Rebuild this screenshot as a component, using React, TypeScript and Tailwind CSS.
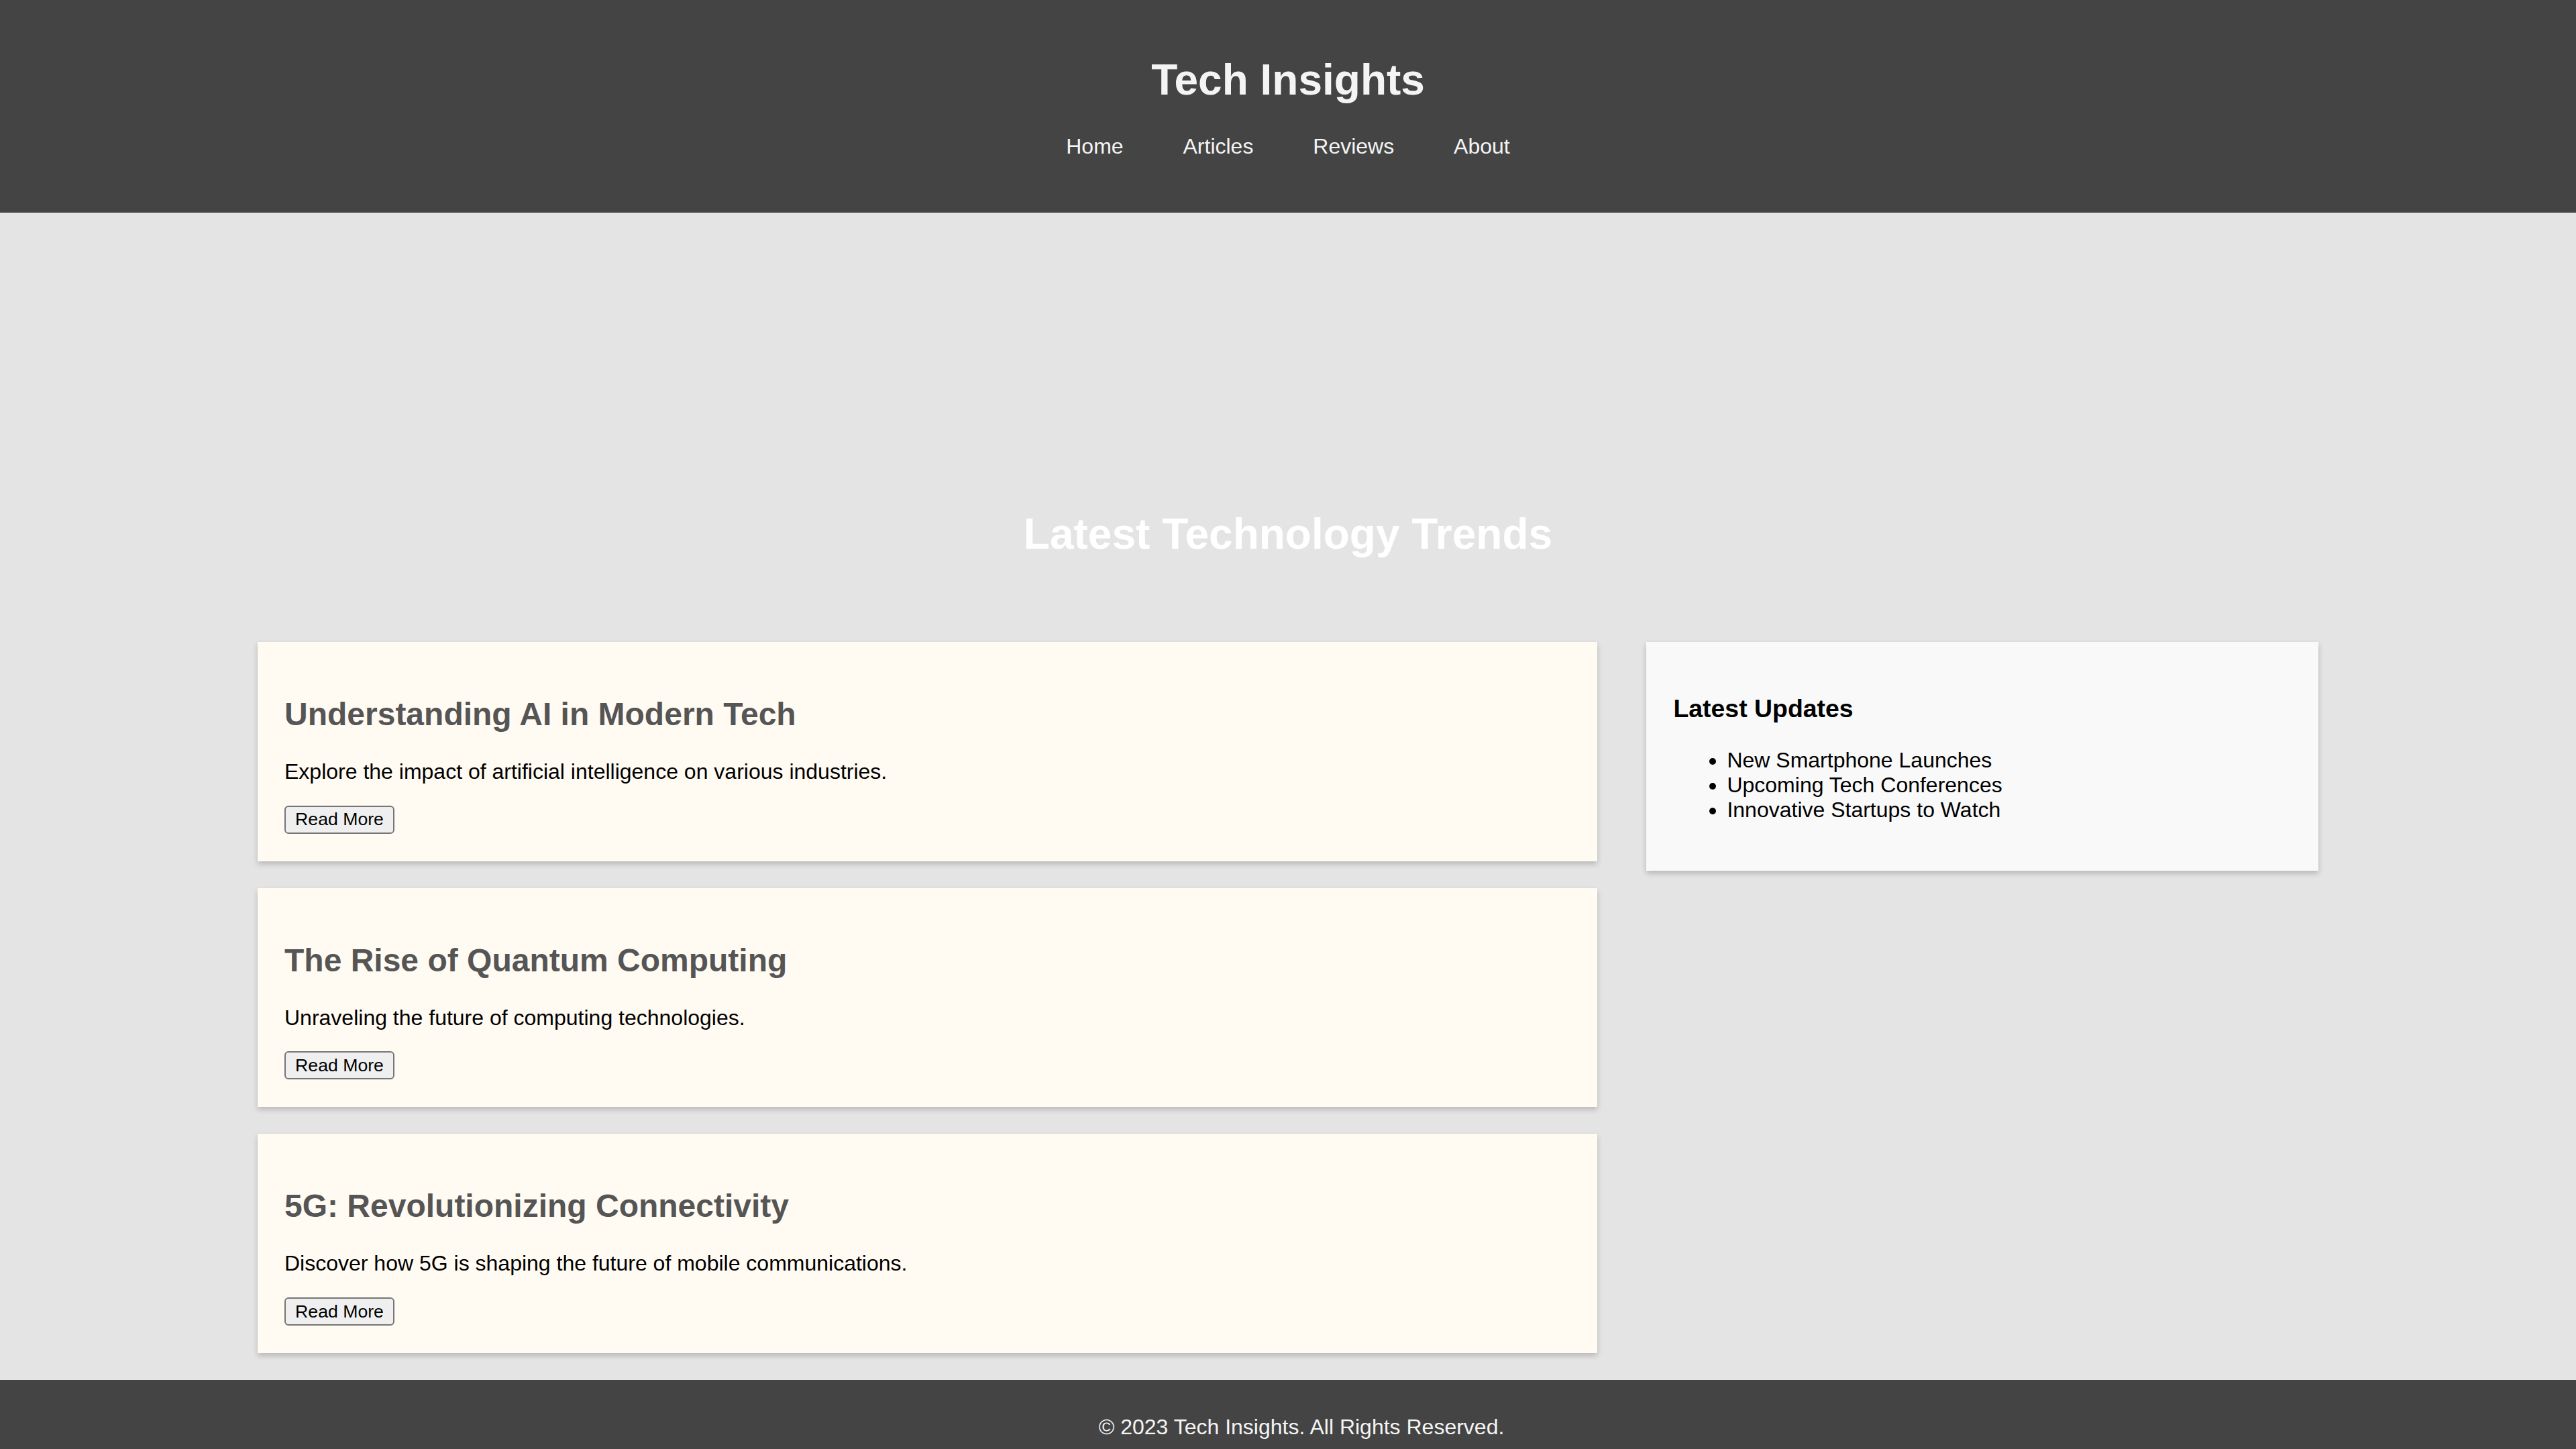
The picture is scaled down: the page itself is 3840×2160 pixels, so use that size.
import React from "react";

const cards = [
  {
    title: "Understanding AI in Modern Tech",
    text: "Explore the impact of artificial intelligence on various industries.",
  },
  {
    title: "The Rise of Quantum Computing",
    text: "Unraveling the future of computing technologies.",
  },
  {
    title: "5G: Revolutionizing Connectivity",
    text: "Discover how 5G is shaping the future of mobile communications.",
  },
];

export default function App() {
  return (
    <div
      className="min-h-screen bg-[#e4e4e4] text-black"
      style={{ fontFamily: '"Liberation Sans", Arial, sans-serif' }}
    >
      <header className="h-[317px] bg-[#444444] pt-[83px] text-center">
        <h1 className="text-[64px] font-bold leading-[73.6px] text-[#f4f4f4]">
          Tech Insights
        </h1>
        <nav className="mt-[43px]">
          <ul className="flex justify-center gap-[88.9px] text-[32px] leading-[36.8px] text-[#f4f4f4]">
            <li>Home</li>
            <li>Articles</li>
            <li>Reviews</li>
            <li>About</li>
          </ul>
        </nav>
      </header>

      <section className="pt-[442.5px] pb-[124px] text-center">
        <h2 className="text-[64px] font-bold leading-[73.6px] text-white">
          Latest Technology Trends
        </h2>
      </section>

      <div className="mx-auto flex w-[3072px] items-start justify-between">
        <main className="w-[1996.8px]">
          {cards.map((c) => (
            <article
              key={c.title}
              className="mb-[40px] h-[326.7px] bg-[#fffaf2] px-[40px] pt-[40px] shadow-[0_4px_8px_rgba(0,0,0,0.2)]"
            >
              <h2 className="mt-[39.84px] mb-[39.84px] text-[48px] font-bold leading-[55.2px] text-[#555555]">
                {c.title}
              </h2>
              <p className="mb-[32px] text-[32px] leading-[36.8px]">{c.text}</p>
              <div className="h-[43px]">
                <button className="flex h-[42px] w-[164px] items-center justify-center rounded-[6px] border-2 border-[#767676] bg-[#efefef] text-[26.67px] leading-none text-black">
                  Read More
                </button>
              </div>
            </article>
          ))}
        </main>

        <aside className="h-[341px] w-[1001.6px] bg-[#f9f9f9] p-[40px] shadow-[0_4px_8px_rgba(0,0,0,0.2)]">
          <h3 className="mt-[37.44px] mb-[37.44px] text-[37.44px] font-bold leading-[43.05px]">
            Latest Updates
          </h3>
          <ul className="list-disc pl-[80px] text-[32px] leading-[36.8px]">
            <li>New Smartphone Launches</li>
            <li>Upcoming Tech Conferences</li>
            <li>Innovative Startups to Watch</li>
          </ul>
        </aside>
      </div>

      <footer className="bg-[#444444] pt-[20px] pb-[20px] pl-[40px] text-center">
        <p className="my-[32px] text-[32px] leading-[36.8px] text-[#f4f4f4]">
          © 2023 Tech Insights. All Rights Reserved.
        </p>
      </footer>
    </div>
  );
}
